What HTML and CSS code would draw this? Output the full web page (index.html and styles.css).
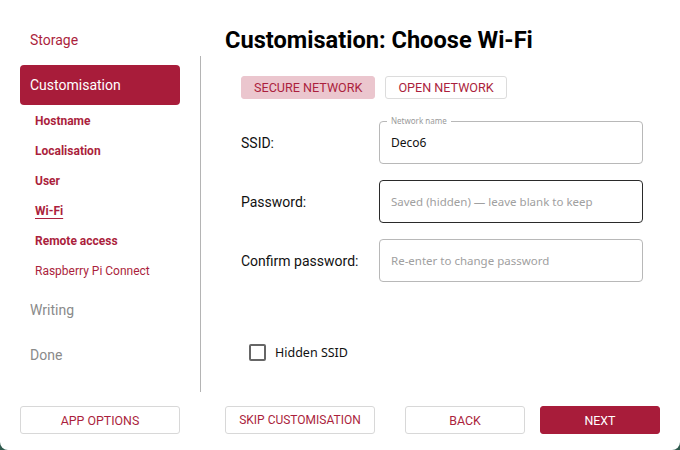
FILE: index.html
```html
<!DOCTYPE html>
<html lang="en">
<head>
<meta charset="utf-8">
<title>Customisation: Choose Wi-Fi</title>
<link rel="stylesheet" href="styles.css">
</head>
<body>
<div class="app">
  <div class="top">
    <nav class="sidebar">
      <div class="nav-item">Storage</div>
      <div class="nav-item active">Customisation</div>
      <ul class="sub">
        <li class="done">Hostname</li>
        <li class="done">Localisation</li>
        <li class="done">User</li>
        <li class="done current">Wi-Fi</li>
        <li class="done">Remote access</li>
        <li>Raspberry Pi Connect</li>
      </ul>
      <div class="nav-item muted first-muted">Writing</div>
      <div class="nav-item muted">Done</div>
    </nav>
    <div class="divider"></div>
    <main class="content">
      <h1 class="title">Customisation: Choose Wi-Fi</h1>
      <div class="tabs">
        <button class="tab selected">SECURE NETWORK</button>
        <button class="tab">OPEN NETWORK</button>
      </div>
      <div class="form">
        <div class="row">
          <label class="label">SSID:</label>
          <div class="field">
            <span class="legend">Network name</span>
            <span class="value">Deco6</span>
          </div>
        </div>
        <div class="row">
          <label class="label">Password:</label>
          <div class="field focused">
            <span class="placeholder">Saved (hidden) — leave blank to keep</span>
          </div>
        </div>
        <div class="row">
          <label class="label">Confirm password:</label>
          <div class="field">
            <span class="placeholder">Re-enter to change password</span>
          </div>
        </div>
      </div>
      <div class="check">
        <span class="box"></span>
        <span class="check-label">Hidden SSID</span>
      </div>
    </main>
  </div>
  <div class="bottom">
    <button class="btn app-options">APP OPTIONS</button>
    <button class="btn skip">SKIP CUSTOMISATION</button>
    <div class="spacer"></div>
    <button class="btn back">BACK</button>
    <button class="btn primary">NEXT</button>
  </div>
</div>
</body>
</html>
```

FILE: styles.css
```css
html, body {
  margin: 0;
  padding: 0;
  background: #2f5a4e;
}
body {
  width: 680px;
  height: 450px;
  font-family: Roboto, "Liberation Sans", sans-serif;
}
.app {
  width: 680px;
  height: 450px;
  background: #ffffff;
  border-radius: 0 0 8px 8px;
  display: flex;
  flex-direction: column;
  overflow: hidden;
}
.top {
  display: flex;
  height: 406px;
}
.sidebar {
  width: 200px;
  box-sizing: border-box;
  padding: 20px 20px 0 20px;
}
.nav-item {
  height: 40px;
  line-height: 40px;
  padding-left: 10px;
  font-size: 14px;
  color: #ab1f3d;
  border-radius: 4px;
  margin-bottom: 5px;
}
.nav-item.active {
  background: #a81c3a;
  color: #ffffff;
  margin-bottom: 1px;
}
.nav-item.muted {
  color: #8a8a8a;
}
.nav-item.first-muted {
  margin-top: 4px;
}
.sub {
  list-style: none;
  margin: 0;
  padding: 0;
}
.sub li {
  height: 30px;
  line-height: 30px;
  padding-left: 15px;
  font-size: 12px;
  color: #ab1f3d;
}
.sub li.done {
  font-weight: bold;
}
.sub li.current {
  text-decoration: underline;
  text-underline-offset: 3px;
}
.divider {
  width: 1px;
  margin-top: 56px;
  height: 336px;
  background: #b4b4b4;
}
.content {
  flex: 1;
  padding: 25px 37px 0 24px;
}
.title {
  margin: 0;
  font-size: 23.6px;
  line-height: 30px;
  font-weight: bold;
  color: #000000;
}
.tabs {
  display: flex;
  gap: 10px;
  margin: 21px 0 0 16px;
}
.tab {
  height: 23px;
  box-sizing: border-box;
  padding: 0 12px;
  font-family: Roboto, "Liberation Sans", sans-serif;
  font-size: 12.6px;
  color: #ab1f3d;
  background: #ffffff;
  border: 1px solid #dcdcdc;
  border-radius: 3px;
}
.tab.selected {
  background: #ebc6ce;
  border-color: #ebc6ce;
}
.form {
  margin: 22px 0 0 16px;
  display: flex;
  flex-direction: column;
  gap: 16px;
}
.row {
  display: flex;
  align-items: center;
}
.label {
  width: 138px;
  font-size: 14px;
  color: #111111;
}
.field {
  position: relative;
  flex: 1;
  height: 43px;
  box-sizing: border-box;
  border: 1px solid #b8b8b8;
  border-radius: 4px;
  display: flex;
  align-items: center;
  padding-left: 11px;
  font-family: "Noto Sans", "Open Sans", sans-serif;
}
.field.focused {
  border-color: #2a2a2a;
}
.legend {
  position: absolute;
  top: -6px;
  left: 7px;
  padding: 0 4px;
  background: #ffffff;
  font-size: 8px;
  line-height: 10px;
  color: #9a9a9a;
}
.value {
  font-size: 12px;
  color: #111111;
}
.placeholder {
  font-size: 11.5px;
  color: #a0a0a0;
}
.check {
  display: flex;
  align-items: center;
  margin: 62px 0 0 24px;
}
.box {
  width: 17px;
  height: 17px;
  box-sizing: border-box;
  border: 2px solid #666666;
  border-radius: 2px;
}
.check-label {
  margin-left: 9px;
  font-family: "Noto Sans", "Open Sans", sans-serif;
  font-size: 12.5px;
  color: #111111;
}
.bottom {
  display: flex;
  padding: 0 20px;
  height: 28px;
}
.btn {
  height: 28px;
  box-sizing: border-box;
  font-family: Roboto, "Liberation Sans", sans-serif;
  font-size: 12.4px;
  color: #ab1f3d;
  background: #ffffff;
  border: 1px solid #d8d8d8;
  border-radius: 3px;
  padding: 0;
}
.app-options {
  width: 160px;
  margin-right: 45px;
}
.skip {
  width: 150px;
  font-size: 12px;
}
.spacer {
  flex: 1;
}
.back {
  width: 120px;
  margin-right: 15px;
}
.primary {
  width: 120px;
  background: #a81c3a;
  border-color: #a81c3a;
  color: #ffffff;
}
```
